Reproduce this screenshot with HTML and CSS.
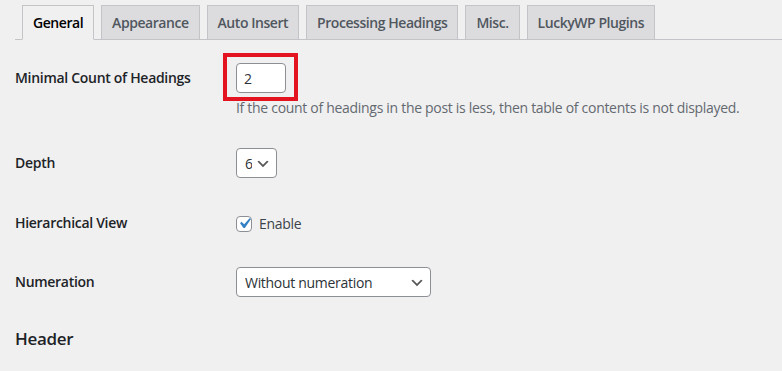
FILE: index.html
```html
<!DOCTYPE html>
<html lang="en">
<head>
  <meta charset="UTF-8">
  <title>Table of Contents Settings</title>
  <link rel="stylesheet" href="styles.css">
</head>
<body>

  <div class="wrap">
    <!-- tabs -->
    <nav class="nav-tab-wrapper">
      <a href="#" class="nav-tab nav-tab-active">General</a>
      <a href="#" class="nav-tab">Appearance</a>
      <a href="#" class="nav-tab">Auto Insert</a>
      <a href="#" class="nav-tab">Processing Headings</a>
      <a href="#" class="nav-tab">Misc.</a>
      <a href="#" class="nav-tab">LuckyWP Plugins</a>
    </nav>

    <!-- settings -->
    <div class="form-table">
      <div class="form-row">
        <div class="form-label">Minimal Count of Headings</div>
        <div class="form-field">
          <span class="highlight">
            <input type="text" class="small-text" value="2">
          </span>
          <p class="description">If the count of headings in the post is less, then table of contents is not displayed.</p>
        </div>
      </div>

      <div class="form-row">
        <div class="form-label">Depth</div>
        <div class="form-field">
          <select class="select-depth">
            <option>6</option>
          </select>
        </div>
      </div>

      <div class="form-row">
        <div class="form-label">Hierarchical View</div>
        <div class="form-field">
          <label class="checkbox-label">
            <span class="checkbox">
              <svg viewBox="0 0 20 20" width="21" height="21"><path d="M14.83 4.89l1.34.94-5.81 8.38H9.02L5.78 9.67l1.34-1.25 2.57 2.4z" fill="#3582c4"/></svg>
            </span>
            Enable
          </label>
        </div>
      </div>

      <div class="form-row">
        <div class="form-label">Numeration</div>
        <div class="form-field">
          <select class="select-numeration">
            <option>Without numeration</option>
          </select>
        </div>
      </div>
    </div>

    <h2 class="section-title">Header</h2>
  </div>

</body>
</html>
```

FILE: styles.css
```css
/* ===== base ===== */
body {
  margin: 0;
  background: #f0f0f1;
  color: #3c434a;
  font-family: "Segoe UI", "Open Sans", "Noto Sans", sans-serif;
  font-size: 14px;
  line-height: 1.4;
  letter-spacing: -0.3px;
}

.wrap {
  margin: 0 0 0 15px;
}

/* ===== tabs ===== */
.nav-tab-wrapper {
  display: flex;
  align-items: flex-end;
  padding-top: 5px;
  border-bottom: 1px solid #c3c4c7;
}
.nav-tab {
  margin-left: 7px;
  margin-bottom: -1px;
  padding: 5px 10px;
  border: 1px solid #c3c4c7;
  background: #dcdcde;
  color: #50575e;
  font-size: 14px;
  font-weight: 600;
  line-height: 23px;
  letter-spacing: -0.45px;
  text-decoration: none;
  white-space: nowrap;
}
.nav-tab-active {
  background: #f0f0f1;
  color: #000;
  border-bottom-color: #f0f0f1;
}

/* ===== form rows ===== */
.form-table {
  margin-top: 8px;
}
.form-row {
  display: grid;
  grid-template-columns: 221px 1fr;
}
.form-label {
  padding: 21px 0 20px;
  color: #1d2327;
  font-weight: 600;
  line-height: 18px;
}
.form-field {
  padding: 15px 0;
}

.highlight {
  position: relative;
  display: inline-block;
  vertical-align: top;
}
.highlight::after {
  content: "";
  position: absolute;
  left: -13px;
  top: -10px;
  width: 67px;
  height: 40px;
  border: 4px solid #e3141f;
}

input.small-text,
select {
  box-sizing: border-box;
  height: 30px;
  margin: 0;
  border: 1px solid #8c8f94;
  border-radius: 4px;
  background-color: #fff;
  color: #2c3338;
  font-family: inherit;
  font-size: 14px;
  letter-spacing: -0.3px;
}
input.small-text {
  display: block;
  width: 50px;
  padding: 0 7px;
}

select {
  display: block;
  padding: 0 24px 0 8px;
  -webkit-appearance: none;
  appearance: none;
  background-image: url("data:image/svg+xml,%3Csvg xmlns='http://www.w3.org/2000/svg' width='20' height='20' viewBox='0 0 20 20'%3E%3Cpath d='M5 6l5 5 5-5 2 1-7 7-7-7z' fill='%23555'/%3E%3C/svg%3E");
  background-size: 16px 16px;
  background-position: right 5px top 55%;
  background-repeat: no-repeat;
}
.select-depth {
  width: 41px;
}
.select-numeration {
  width: 195px;
}

.description {
  margin: 4px 0 0;
  color: #646970;
  line-height: 21px;
}

/* checkbox */
.checkbox-label {
  box-sizing: border-box;
  display: flex;
  align-items: center;
  gap: 7px;
  height: 29px;
  padding-top: 2px;
  color: #3c434a;
}
.checkbox {
  box-sizing: border-box;
  display: flex;
  align-items: center;
  justify-content: center;
  width: 16px;
  height: 16px;
  border: 1px solid #8c8f94;
  border-radius: 4px;
  background: #fff;
}
.checkbox svg {
  flex-shrink: 0;
  margin: -3px -4px;
}

/* ===== section title ===== */
.section-title {
  margin: 15px 0;
  color: #1d2327;
  font-size: 17px;
  font-weight: 600;
}
```
